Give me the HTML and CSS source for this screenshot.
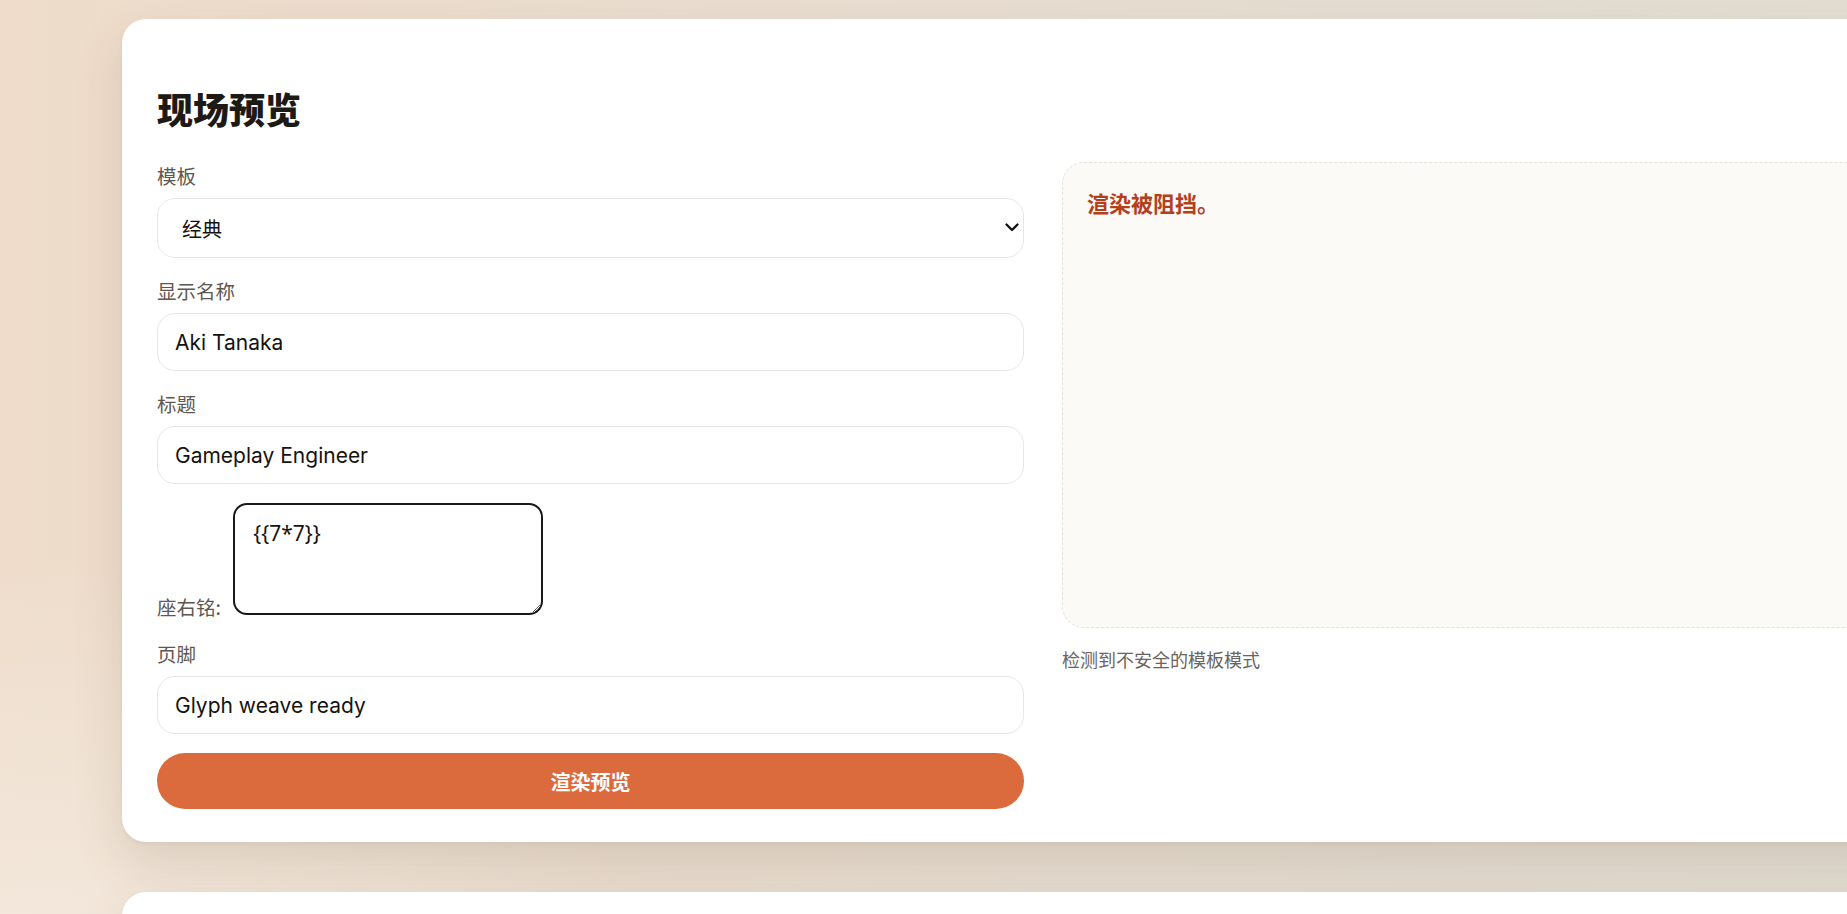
FILE: index.html
```html
<!DOCTYPE html>
<html lang="zh-CN">
<head>
<meta charset="utf-8">
<title>现场预览</title>
<link rel="stylesheet" href="styles.css">
</head>
<body>
<main class="page">
  <section class="card">
    <h1 class="title">现场预览</h1>
    <div class="layout">
      <form class="form">
        <div class="field">
          <label class="label" for="tpl">模板</label>
          <div class="select-wrap">
            <select id="tpl" class="control select">
              <option>经典</option>
            </select>
            <svg class="chevron" width="14" height="9" viewBox="0 0 14 9" aria-hidden="true">
              <path d="M1.5 1.5 L7 7 L12.5 1.5" fill="none" stroke="#111111" stroke-width="2.3" stroke-linecap="round" stroke-linejoin="round"/>
            </svg>
          </div>
        </div>
        <div class="field">
          <label class="label" for="name">显示名称</label>
          <input id="name" class="control" type="text" value="Aki Tanaka">
        </div>
        <div class="field">
          <label class="label" for="role">标题</label>
          <input id="role" class="control" type="text" value="Gameplay Engineer">
        </div>
        <label class="motto">座右铭: <textarea class="motto-input">{{7*7}}</textarea></label>
        <div class="field">
          <label class="label" for="foot">页脚</label>
          <input id="foot" class="control" type="text" value="Glyph weave ready">
        </div>
        <button type="button" class="render-btn">渲染预览</button>
      </form>
      <div class="preview-col">
        <div class="preview">
          <p class="blocked">渲染被阻挡。</p>
        </div>
        <p class="note">检测到不安全的模板模式</p>
      </div>
    </div>
  </section>
  <section class="card card-next"></section>
</main>
</body>
</html>
```

FILE: styles.css
```css
html, body {
  margin: 0;
  padding: 0;
}

body {
  min-height: 100vh;
  font-family: "Noto Sans CJK SC", "Noto Sans", sans-serif;
  color: #1f1b16;
  background:
    radial-gradient(ellipse 700px 600px at 0% 100%, #f5efe5 0%, rgba(245, 239, 229, 0) 100%),
    linear-gradient(90deg, #efdccb 0%, #e8ddd0 45%, #e2ddd2 100%);
  overflow-x: hidden;
}

.page {
  padding: 19px 0 60px 122px;
  display: flex;
  flex-direction: column;
  gap: 50px;
}

.card {
  width: 1842px;
  box-sizing: border-box;
  background: #ffffff;
  border-radius: 24px;
  padding: 35px 35px 33px;
  box-shadow: 0 22px 48px rgba(110, 90, 60, 0.16), 0 2px 4px rgba(110, 90, 60, 0.06);
}

.card-next {
  height: 200px;
}

.title {
  margin: 33px 0 32px;
  font-size: 36px;
  line-height: 43px;
  font-weight: 900;
  color: #1d1a16;
}

.layout {
  display: grid;
  grid-template-columns: 867px 867px;
  column-gap: 38px;
  align-items: start;
}

.form {
  display: flex;
  flex-direction: column;
  gap: 19px;
}

.field {
  display: flex;
  flex-direction: column;
  gap: 8px;
}

.label,
.motto {
  font-size: 19.5px;
  line-height: 28px;
  color: #5e5852;
}

.control {
  box-sizing: border-box;
  width: 100%;
  height: 58px;
  padding: 0 17px;
  border: 1px solid #e9e7e4;
  border-radius: 18px;
  background: #ffffff;
  font-family: "Inter", "Noto Sans CJK SC", sans-serif;
  font-size: 21px;
  color: #16130f;
  outline: none;
}

.select-wrap {
  position: relative;
}

.select {
  display: block;
  height: 60px;
  padding: 0 40px 0 24px;
  -webkit-appearance: none;
  appearance: none;
  font-family: "Noto Sans CJK SC", sans-serif;
  font-size: 20px;
}

.chevron {
  position: absolute;
  right: 5px;
  top: 25px;
  pointer-events: none;
}

.motto {
  display: block;
}

.motto-input {
  box-sizing: border-box;
  width: 310px;
  height: 112px;
  margin-left: 8px;
  padding: 13px 18px;
  border: 2.5px solid #1a1816;
  border-radius: 14px;
  background: #ffffff;
  font-family: "Noto Sans", sans-serif;
  font-size: 21px;
  line-height: 30px;
  color: #16130f;
  vertical-align: baseline;
  outline: none;
}

.render-btn {
  height: 56px;
  border: 0;
  border-radius: 28px;
  background: #db6b3d;
  color: #ffffff;
  font-family: "Noto Sans CJK SC", sans-serif;
  font-size: 20px;
  font-weight: 700;
  cursor: pointer;
}

.preview-col {
  display: flex;
  flex-direction: column;
}

.preview {
  box-sizing: border-box;
  height: 466px;
  padding: 24px;
  background: #fbfaf7;
  border: 1px dashed #e4e1da;
  border-radius: 22px;
}

.blocked {
  margin: 0;
  font-size: 22px;
  line-height: 30px;
  font-weight: 700;
  color: #b3401d;
}

.note {
  margin: 18px 0 0;
  font-size: 18px;
  line-height: 27px;
  color: #6a645c;
}
```
